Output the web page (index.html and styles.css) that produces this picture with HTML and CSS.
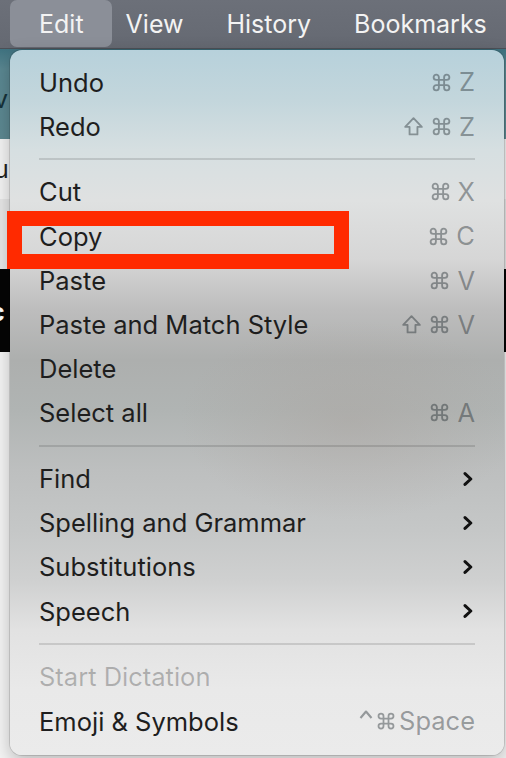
FILE: index.html
```html
<!DOCTYPE html>
<html lang="en">
<head>
<meta charset="utf-8">
<title>Edit menu</title>
<link rel="stylesheet" href="styles.css">
</head>
<body>
<div class="screen">
  <nav class="menubar">
    <span class="mb-item active">Edit</span>
    <span class="mb-item">View</span>
    <span class="mb-item">History</span>
    <span class="mb-item">Bookmarks</span>
  </nav>
  <div class="backdrop">
    <div class="bd bd-teal"><span class="bd-glyph dark">v</span></div>
    <div class="bd bd-white"><span class="bd-glyph">u</span></div>
    <div class="bd bd-gray"><span class="bd-bar"></span></div>
    <div class="bd bd-black"><span class="bd-glyph light">c</span></div>
    <div class="bd bd-white2"></div>
  </div>

  <div class="menu">
    <div class="row"><span class="label">Undo</span>
      <span class="keys">
        <svg class="k-cmd" viewBox="0 0 24 24"><path d="M18 3a3 3 0 0 0-3 3v12a3 3 0 0 0 3 3 3 3 0 0 0 3-3 3 3 0 0 0-3-3H6a3 3 0 0 0-3 3 3 3 0 0 0 3 3 3 3 0 0 0 3-3V6a3 3 0 0 0-3-3 3 3 0 0 0-3 3 3 3 0 0 0 3 3h12a3 3 0 0 0 3-3 3 3 0 0 0-3-3z"/></svg>
        <span class="k-char">Z</span></span></div>
    <div class="row"><span class="label">Redo</span>
      <span class="keys">
        <svg class="k-shift" viewBox="0 0 24 24"><path d="M12 2.5 L2.5 12.5 H7.5 V21 H16.5 V12.5 H21.5 Z"/></svg>
        <svg class="k-cmd" viewBox="0 0 24 24"><path d="M18 3a3 3 0 0 0-3 3v12a3 3 0 0 0 3 3 3 3 0 0 0 3-3 3 3 0 0 0-3-3H6a3 3 0 0 0-3 3 3 3 0 0 0 3 3 3 3 0 0 0 3-3V6a3 3 0 0 0-3-3 3 3 0 0 0-3 3 3 3 0 0 0 3 3h12a3 3 0 0 0 3-3 3 3 0 0 0-3-3z"/></svg>
        <span class="k-char">Z</span></span></div>
    <div class="sep"></div>
    <div class="row"><span class="label">Cut</span>
      <span class="keys">
        <svg class="k-cmd" viewBox="0 0 24 24"><path d="M18 3a3 3 0 0 0-3 3v12a3 3 0 0 0 3 3 3 3 0 0 0 3-3 3 3 0 0 0-3-3H6a3 3 0 0 0-3 3 3 3 0 0 0 3 3 3 3 0 0 0 3-3V6a3 3 0 0 0-3-3 3 3 0 0 0-3 3 3 3 0 0 0 3 3h12a3 3 0 0 0 3-3 3 3 0 0 0-3-3z"/></svg>
        <span class="k-char">X</span></span></div>
    <div class="row"><span class="label">Copy</span>
      <span class="keys">
        <svg class="k-cmd" viewBox="0 0 24 24"><path d="M18 3a3 3 0 0 0-3 3v12a3 3 0 0 0 3 3 3 3 0 0 0 3-3 3 3 0 0 0-3-3H6a3 3 0 0 0-3 3 3 3 0 0 0 3 3 3 3 0 0 0 3-3V6a3 3 0 0 0-3-3 3 3 0 0 0-3 3 3 3 0 0 0 3 3h12a3 3 0 0 0 3-3 3 3 0 0 0-3-3z"/></svg>
        <span class="k-char">C</span></span></div>
    <div class="row"><span class="label">Paste</span>
      <span class="keys">
        <svg class="k-cmd" viewBox="0 0 24 24"><path d="M18 3a3 3 0 0 0-3 3v12a3 3 0 0 0 3 3 3 3 0 0 0 3-3 3 3 0 0 0-3-3H6a3 3 0 0 0-3 3 3 3 0 0 0 3 3 3 3 0 0 0 3-3V6a3 3 0 0 0-3-3 3 3 0 0 0-3 3 3 3 0 0 0 3 3h12a3 3 0 0 0 3-3 3 3 0 0 0-3-3z"/></svg>
        <span class="k-char">V</span></span></div>
    <div class="row"><span class="label">Paste and Match Style</span>
      <span class="keys">
        <svg class="k-shift" viewBox="0 0 24 24"><path d="M12 2.5 L2.5 12.5 H7.5 V21 H16.5 V12.5 H21.5 Z"/></svg>
        <svg class="k-cmd" viewBox="0 0 24 24"><path d="M18 3a3 3 0 0 0-3 3v12a3 3 0 0 0 3 3 3 3 0 0 0 3-3 3 3 0 0 0-3-3H6a3 3 0 0 0-3 3 3 3 0 0 0 3 3 3 3 0 0 0 3-3V6a3 3 0 0 0-3-3 3 3 0 0 0-3 3 3 3 0 0 0 3 3h12a3 3 0 0 0 3-3 3 3 0 0 0-3-3z"/></svg>
        <span class="k-char">V</span></span></div>
    <div class="row"><span class="label">Delete</span></div>
    <div class="row"><span class="label">Select all</span>
      <span class="keys">
        <svg class="k-cmd" viewBox="0 0 24 24"><path d="M18 3a3 3 0 0 0-3 3v12a3 3 0 0 0 3 3 3 3 0 0 0 3-3 3 3 0 0 0-3-3H6a3 3 0 0 0-3 3 3 3 0 0 0 3 3 3 3 0 0 0 3-3V6a3 3 0 0 0-3-3 3 3 0 0 0-3 3 3 3 0 0 0 3 3h12a3 3 0 0 0 3-3 3 3 0 0 0-3-3z"/></svg>
        <span class="k-char">A</span></span></div>
    <div class="sep"></div>
    <div class="row"><span class="label">Find</span><svg class="chev" viewBox="0 0 10 14"><path d="M2 1.6 L7.8 7 L2 12.4"/></svg></div>
    <div class="row"><span class="label">Spelling and Grammar</span><svg class="chev" viewBox="0 0 10 14"><path d="M2 1.6 L7.8 7 L2 12.4"/></svg></div>
    <div class="row"><span class="label">Substitutions</span><svg class="chev" viewBox="0 0 10 14"><path d="M2 1.6 L7.8 7 L2 12.4"/></svg></div>
    <div class="row"><span class="label">Speech</span><svg class="chev" viewBox="0 0 10 14"><path d="M2 1.6 L7.8 7 L2 12.4"/></svg></div>
    <div class="sep"></div>
    <div class="row disabled"><span class="label">Start Dictation</span></div>
    <div class="row"><span class="label">Emoji &amp; Symbols</span>
      <span class="keys tight">
        <svg class="k-ctrl" viewBox="0 0 14 24"><path d="M1.5 12 L7 5.5 L12.5 12"/></svg>
        <svg class="k-cmd small" viewBox="0 0 24 24"><path d="M18 3a3 3 0 0 0-3 3v12a3 3 0 0 0 3 3 3 3 0 0 0 3-3 3 3 0 0 0-3-3H6a3 3 0 0 0-3 3 3 3 0 0 0 3 3 3 3 0 0 0 3-3V6a3 3 0 0 0-3-3 3 3 0 0 0-3 3 3 3 0 0 0 3 3h12a3 3 0 0 0 3-3 3 3 0 0 0-3-3z"/></svg>
        <span class="k-char">Space</span></span></div>
  </div>

  <div class="highlight"></div>
</div>
</body>
</html>
```

FILE: styles.css
```css
* { box-sizing: border-box; }
html, body { margin: 0; padding: 0; }
body {
  width: 506px;
  height: 758px;
  overflow: hidden;
  background: #f4f4f4;
  font-family: Inter, "Noto Sans", "DejaVu Sans", sans-serif;
}
.screen {
  position: relative;
  width: 506px;
  height: 758px;
  overflow: hidden;
}

/* menu bar */
.menubar {
  height: 49px;
  display: flex;
  align-items: flex-start;
  padding-left: 10px;
  background: linear-gradient(#6c7079, #656972);
  border-bottom: 1px solid #4d5057;
}
.mb-item {
  height: 47px;
  display: flex;
  align-items: center;
  color: #f3f3f3;
  font-size: 25px;
  padding: 1px 29px 0 14px;
  white-space: nowrap;
}
.mb-item.active {
  background: #8b8f98;
  border-radius: 7px;
  padding: 1px 28px 0 29px;
}

/* backdrop content behind the menu */
.backdrop { display: flex; flex-direction: column; }
.bd { position: relative; overflow: hidden; }
.bd-teal { height: 90px; background: linear-gradient(180deg, #3f7280 0px, #5a8791 20px, #5d8891 90px); }
.bd-white { height: 60px; background: #f3f3f3; }
.bd-gray { height: 70px; background: #e6e6e6; }
.bd-black { height: 83px; background: #050505; }
.bd-white2 { height: 420px; background: #f4f4f4; }
.bd-glyph {
  font-size: 25px;
  color: #222;
  display: block;
  margin-left: -6px;
  padding-top: 18px;
  line-height: 1;
}
.bd-glyph.dark { color: #16323a; padding-top: 38px; }
.bd-glyph.light { color: #fff; font-weight: 700; padding-top: 31px; margin-left: -10px; }
.bd-bar {
  display: block;
  width: 3px;
  height: 18px;
  margin: 28px 0 0 20px;
  background: #444;
}

/* dropdown menu (overlay) */
.menu {
  position: absolute;
  top: 50px;
  left: 10px;
  width: 494px;
  height: 705px;
  border-radius: 12px;
  padding: 10px 29px 12px 29px;
  display: flex;
  flex-direction: column;
  background:
    radial-gradient(ellipse 170px 100px at 340px 370px, rgba(168,158,152,0.35), rgba(168,158,152,0) 100%),
    linear-gradient(180deg,
      #b7d1db 0px,
      #c3d6dc 50px,
      #d6dfe1 100px,
      #dfe1e1 150px,
      #d6d6d6 210px,
      #bdbdbd 260px,
      #adafae 310px,
      #b0b4b3 360px,
      #bdbfbf 420px,
      #c5c7c7 480px,
      #cfd0d0 530px,
      #e2e2e2 580px,
      #e9e9e9 640px,
      #ebebeb 705px);
  box-shadow: 0 0 0 1px rgba(0,0,0,0.12), 0 6px 18px rgba(0,0,0,0.25);
}
.row {
  height: 44.2px;
  flex: none;
  display: flex;
  align-items: center;
  justify-content: space-between;
  color: #1e1e1e;
  font-size: 25.5px;
}
.row.disabled { color: rgba(0,0,0,0.25); }
.label { white-space: nowrap; }
.keys {
  display: flex;
  align-items: center;
  gap: 7px;
  color: rgba(30,40,45,0.42);
  font-size: 25.5px;
}
.keys svg {
  fill: none;
  stroke: rgba(30,40,45,0.42);
  stroke-width: 2.1;
  stroke-linejoin: round;
}
.k-cmd { width: 21px; height: 21px; }
.k-cmd.small { width: 20px; height: 20px; }
.k-shift { width: 21px; height: 21px; stroke-width: 1.9; }
.k-ctrl { width: 14px; height: 24px; margin-top: -6px; }
.k-char { line-height: 1; }
.keys.tight { gap: 3px; }
.chev {
  width: 10px;
  height: 14px;
  fill: none;
  stroke: #111;
  stroke-width: 3;
  stroke-linecap: round;
  stroke-linejoin: round;
  margin-right: 2px;
}
.sep {
  flex: none;
  height: 2px;
  margin: 9.5px 0 10px;
  background: rgba(0,0,0,0.12);
}

/* red annotation rectangle (overlay) */
.highlight {
  position: absolute;
  left: 7px;
  top: 211px;
  width: 342px;
  height: 58px;
  border: 15px solid #ff2a00;
}
```
